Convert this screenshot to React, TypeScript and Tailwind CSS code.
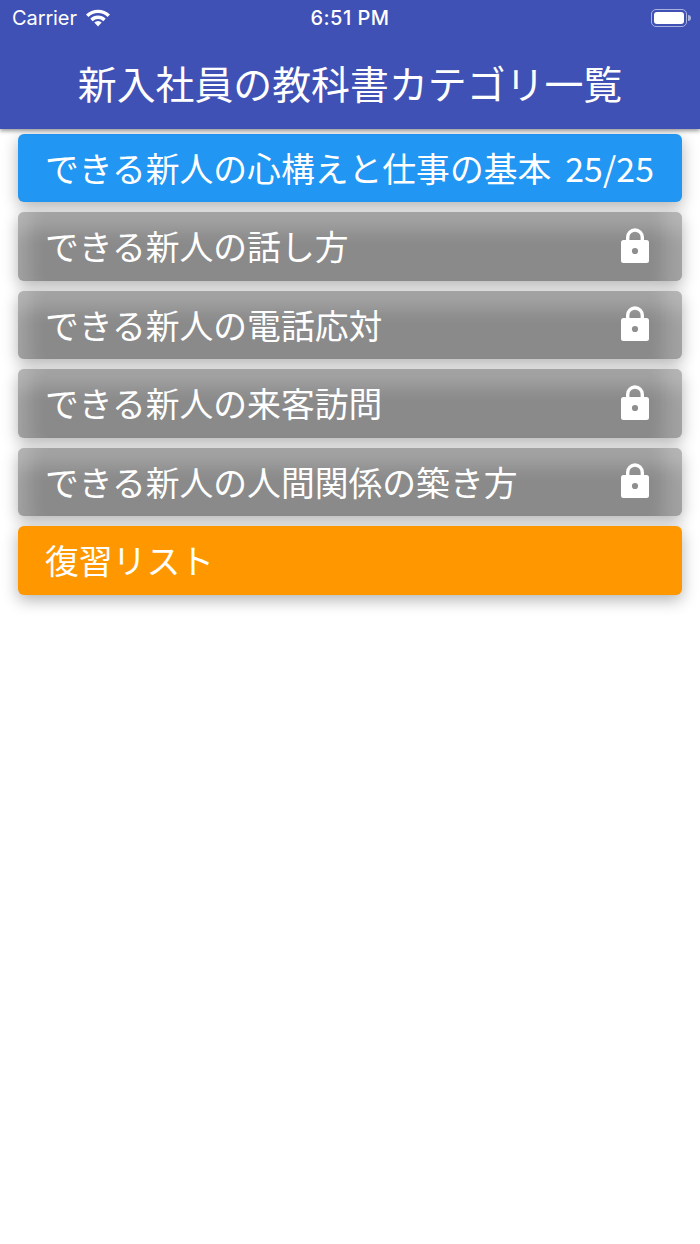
const font = { fontFamily: '"Noto Sans CJK JP", sans-serif' };

function Lock() {
  return (
    <svg width="28" height="35" viewBox="0 0 28 35" className="shrink-0 mr-[5px] -mt-[3px]">
      <path d="M6.700 14V9.300a7.300 7.300 0 0 1 14.600 0V14" fill="none" stroke="white" strokeWidth="3.400" />
      <rect x="0" y="12" width="28" height="23" rx="2.500" fill="white" />
      <circle cx="14" cy="23" r="3.100" fill="#8f8f8f" />
    </svg>
  );
}

function Wifi() {
  return (
    <svg width="26" height="18" viewBox="0 0 26 18" fill="none">
      <path d="M2.200 6.800a15.300 15.300 0 0 1 21.600 0" stroke="white" strokeWidth="3.400" />
      <path d="M6.500 11a9.200 9.200 0 0 1 13 0" stroke="white" strokeWidth="3.400" />
      <path d="M9.300 13.500a5.200 5.200 0 0 1 7.400 0L13 17.500z" fill="white" />
    </svg>
  );
}

function Battery() {
  return (
    <div className="flex items-center gap-[1px]">
      <div className="w-[36px] h-[18px] rounded-[5px] border border-[#a9b2dc] p-[2px] flex">
        <div className="flex-1 bg-white rounded-[3px]" />
      </div>
      <div className="w-[3px] h-[6px] bg-[#a9b2dc] rounded-r-sm" />
    </div>
  );
}

function Row({ label, kind, right }: { label: string; kind: "blue" | "gray" | "orange"; right?: string }) {
  const cls =
    kind === "blue"
      ? "bg-[#2196f3] shadow-[0_5px_16px_rgba(0,0,0,0.3)]"
      : kind === "orange"
        ? "bg-[#ff9800] shadow-[0_5px_16px_rgba(0,0,0,0.3)]"
        : "bg-[#8a8a8a] shadow-[0_5px_16px_rgba(0,0,0,0.3),inset_0_28px_18px_-10px_rgba(255,255,255,0.22),inset_26px_0_18px_-14px_rgba(255,255,255,0.2),inset_-36px_0_18px_-18px_rgba(255,255,255,0.2)]";
  return (
    <div className={`h-[68.5px] rounded-[6px] pl-[27px] pr-[28px] flex items-center justify-between text-white text-[33.8px] leading-none ${cls}`}>
      <span className="whitespace-nowrap -mt-[1px]">{label}</span>
      {right ? <span className="-mt-[1px] tracking-[0.1px]">{right}</span> : null}
      {kind === "gray" ? <Lock /> : null}
    </div>
  );
}

export default function App() {
  return (
    <div className="w-[700px] h-[1244px] bg-white overflow-hidden" style={font}>
      <header className="relative z-10 h-[129px] bg-[#3f51b5] shadow-[0_2px_4px_rgba(0,0,0,0.4)] text-white flex flex-col">
        <div className="relative h-[36px] flex items-center justify-between pl-[12px] pr-[9px]">
          <div className="flex items-center gap-[8px]">
            <span className="text-[20px] leading-none tracking-[-0.1px]" style={{ fontFamily: "Inter, sans-serif" }}>Carrier</span>
            <Wifi />
          </div>
          <span className="absolute left-0 right-0 text-center text-[20px] font-medium leading-none tracking-[0.5px]" style={{ fontFamily: "Inter, sans-serif" }}>6:51 PM</span>
          <Battery />
        </div>
        <div className="flex-1 flex items-center justify-center">
          <h1 className="text-[38.9px] leading-none font-normal whitespace-nowrap">新入社員の教科書カテゴリ一覧</h1>
        </div>
      </header>
      <main className="pt-[4.8px] px-[18px] flex flex-col gap-[10px]">
        <Row kind="blue" label="できる新人の心構えと仕事の基本" right="25/25" />
        <Row kind="gray" label="できる新人の話し方" />
        <Row kind="gray" label="できる新人の電話応対" />
        <Row kind="gray" label="できる新人の来客訪問" />
        <Row kind="gray" label="できる新人の人間関係の築き方" />
        <Row kind="orange" label="復習リスト" />
      </main>
    </div>
  );
}
